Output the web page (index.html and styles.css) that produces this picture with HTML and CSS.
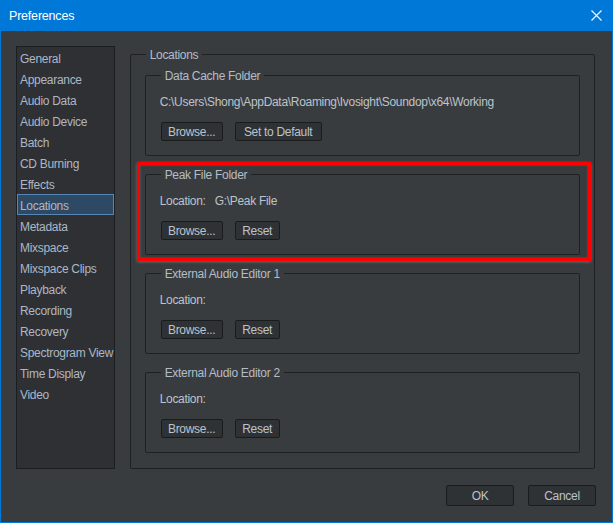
FILE: index.html
```html
<!DOCTYPE html>
<html lang="en">
<head>
  <meta charset="UTF-8">
  <meta name="viewport" content="width=device-width, initial-scale=1.0">
  <title>Preferences</title>
  <link rel="stylesheet" href="styles.css">
</head>
<body>
  <div class="window">
    <div class="titlebar">
      <span class="title">Preferences</span>
      <svg class="close" width="11" height="11" viewBox="0 0 11 11">
        <path d="M0.5 0.5 L10.5 10.5 M10.5 0.5 L0.5 10.5" stroke="#ffffff" stroke-width="1.1" fill="none"/>
      </svg>
    </div>

    <div class="body">
      <div class="main">
        <ul class="nav">
          <li>General</li>
          <li>Appearance</li>
          <li>Audio Data</li>
          <li>Audio Device</li>
          <li>Batch</li>
          <li>CD Burning</li>
          <li>Effects</li>
          <li class="selected">Locations</li>
          <li>Metadata</li>
          <li>Mixspace</li>
          <li>Mixspace Clips</li>
          <li>Playback</li>
          <li>Recording</li>
          <li>Recovery</li>
          <li>Spectrogram View</li>
          <li>Time Display</li>
          <li>Video</li>
        </ul>

        <div class="group outer">
          <div class="group-title">Locations</div>

          <div class="group inner">
            <div class="group-title">Data Cache Folder</div>
            <div class="line">C:\Users\Shong\AppData\Roaming\Ivosight\Soundop\x64\Working</div>
            <div class="actions">
              <button class="btn">Browse...</button>
              <button class="btn wide">Set to Default</button>
            </div>
          </div>

          <div class="group inner">
            <div class="group-title">Peak File Folder</div>
            <div class="line"><span class="label">Location:</span>G:\Peak File</div>
            <div class="actions">
              <button class="btn">Browse...</button>
              <button class="btn small">Reset</button>
            </div>
          </div>

          <div class="group inner">
            <div class="group-title">External Audio Editor 1</div>
            <div class="line"><span class="label">Location:</span></div>
            <div class="actions">
              <button class="btn">Browse...</button>
              <button class="btn small">Reset</button>
            </div>
          </div>

          <div class="group inner">
            <div class="group-title">External Audio Editor 2</div>
            <div class="line"><span class="label">Location:</span></div>
            <div class="actions">
              <button class="btn">Browse...</button>
              <button class="btn small">Reset</button>
            </div>
          </div>
        </div>
      </div>

      <div class="footer">
        <button class="btn dialog">OK</button>
        <button class="btn dialog">Cancel</button>
      </div>
    </div>

    <!-- annotation box drawn over the Peak File Folder group -->
    <div class="highlight"></div>
  </div>
</body>
</html>
```

FILE: styles.css
```css
body {
  margin: 0;
  padding: 0;
  background-color: #393c3f;
  font-family: 'Liberation Sans', Arial, sans-serif;
  font-size: 12px;
  letter-spacing: -0.3px;
}
.window {
  position: relative;
  width: 613px;
  height: 523px;
  box-sizing: border-box;
  border: 1px solid #0078d7;
  background-color: #393c3f;
  color: #bcc3cc;
}
.titlebar {
  height: 30px;
  background-color: #0078d7;
  display: flex;
  align-items: center;
  justify-content: space-between;
  padding: 0 10px 0 8px;
}
.title {
  color: #ffffff;
  font-size: 12.5px;
  letter-spacing: -0.2px;
}
.close {
  display: block;
  margin-top: -2px;
}
.body {
  padding: 15px 16px 16px 15px;
}
.main {
  display: flex;
  align-items: flex-start;
  gap: 15px;
  height: 423px;
}
.nav {
  list-style: none;
  margin: 0;
  padding: 0;
  width: 99px;
  height: 423px;
  box-sizing: border-box;
  border: 1px solid #1d1e20;
  background-color: #2e3033;
  color: #adb7c5;
}
.nav li {
  height: 21px;
  line-height: 24px;
  padding-left: 3px;
  white-space: nowrap;
  box-sizing: border-box;
}
.nav .selected {
  background-color: #2d4963;
  border: 1px solid #5886b4;
  padding-left: 2px;
  line-height: 22px;
}
.group {
  border: 1px solid #1e2022;
  border-radius: 2px;
  box-sizing: border-box;
}
.group-title {
  width: fit-content;
  height: 16px;
  line-height: 18px;
  padding: 0 4px;
  margin-left: 1px;
  background-color: #393c3f;
  color: #b4bcc8;
}
.outer {
  width: 467px;
  height: 415px;
  margin-top: 8px;
  margin-right: 1px;
  padding: 0 14px;
}
.outer > .group-title {
  margin-top: -9px;
  margin-bottom: 13px;
}
.inner {
  height: 81px;
  margin-bottom: 18px;
  padding: 0 14px;
}
.inner > .group-title {
  margin-top: -9px;
  margin-bottom: 10px;
}
.line {
  height: 16px;
  line-height: 18px;
  white-space: nowrap;
  color: #bcc3cc;
}
.label {
  margin-right: 9px;
}
.actions {
  display: flex;
  gap: 12px;
  margin-top: 13px;
  padding-left: 1px;
}
.btn {
  width: 62px;
  height: 19px;
  padding: 2px 0 0;
  font-family: inherit;
  font-size: 12px;
  letter-spacing: -0.3px;
  line-height: 15px;
  color: #bcc3cc;
  background-color: #2f3235;
  border: 1px solid #1a1b1d;
  border-radius: 2px;
}
.btn.small {
  width: 45px;
}
.btn.wide {
  width: 87px;
}
.footer {
  display: flex;
  justify-content: flex-end;
  gap: 14px;
  margin-top: 16px;
}
.btn.dialog {
  width: 68px;
  height: 21px;
  line-height: 17px;
}
.highlight {
  position: absolute;
  left: 136px;
  top: 161px;
  width: 454px;
  height: 99px;
  box-sizing: border-box;
  border: 3px solid #ff0000;
  box-shadow: 0 1px 3px rgba(140, 140, 140, 0.6), inset 0 0 2px rgba(140, 140, 140, 0.6);
}
```
